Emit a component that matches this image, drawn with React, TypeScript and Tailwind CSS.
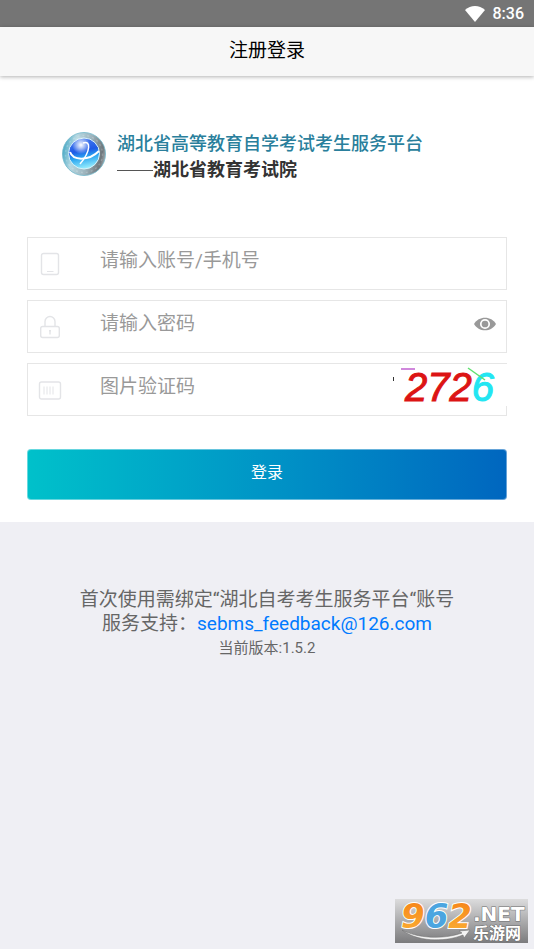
import { useState } from 'react'

const inputClass =
  'h-full min-w-0 flex-1 bg-transparent pb-1.5 text-[19px] text-gray-700 placeholder:text-[#999999] outline-none'

function WifiIcon() {
  return (
    <svg className="h-4 w-5" viewBox="0 0 20 16" fill="#ffffff" aria-hidden="true">
      <path d="M0 4C3 1.400 6.300 0 10 0s7 1.400 10 4L10 16z" />
    </svg>
  )
}

function PhoneIcon() {
  return (
    <svg className="h-6 w-6" viewBox="0 0 24 24" fill="none" stroke="#e3e4e7" strokeWidth="1.400" aria-hidden="true">
      <rect x="3.500" y="1.500" width="17" height="21" rx="2" />
      <path d="M9 19.500h6.500" strokeWidth="1" />
    </svg>
  )
}

function LockIcon() {
  return (
    <svg className="h-6 w-6" viewBox="0 0 24 24" fill="none" stroke="#e3e4e7" strokeWidth="1.400" aria-hidden="true">
      <rect x="2.700" y="11.500" width="18.600" height="11" rx="2" />
      <path d="M7 11.500V6.500a5 5 0 0 1 10 0v5" />
      <path d="M12 15.500v4M11 15.700h2" />
    </svg>
  )
}

function CodeIcon() {
  return (
    <svg className="h-6 w-6" viewBox="0 0 24 24" fill="none" stroke="#e3e4e7" strokeWidth="1.400" aria-hidden="true">
      <rect x="1.500" y="4" width="21" height="17" rx="2" />
      <path d="M6 8.500v8M9 8.500v8M12 8.500v8M15 8.500v8" strokeWidth="1" />
    </svg>
  )
}

function EyeIcon() {
  return (
    <svg className="h-6 w-6" viewBox="0 0 24 24" aria-hidden="true">
      <path d="M1 12C3.500 7.900 7.400 5.700 12 5.700S20.500 7.900 23 12c-2.500 4.100-6.400 6.300-11 6.300S3.500 16.100 1 12z" fill="#999999" />
      <circle cx="12" cy="12" r="4.200" fill="#999999" stroke="#ffffff" strokeWidth="1.700" />
    </svg>
  )
}

function GlobeLogo() {
  return (
    <svg className="h-[46px] w-11 shrink-0" viewBox="0 0 44 44" aria-hidden="true">
      <defs>
        <linearGradient id="ring" x1="0" y1="0.400" x2="1" y2="0.600">
          <stop offset="0" stopColor="#4aa9c6" />
          <stop offset="0.250" stopColor="#b5d8e2" />
          <stop offset="0.600" stopColor="#9db4bd" />
          <stop offset="0.900" stopColor="#6f777c" />
          <stop offset="1" stopColor="#a5adb1" />
        </linearGradient>
        <linearGradient id="ball" x1="0.400" y1="0" x2="0.600" y2="1">
          <stop offset="0" stopColor="#4a7cf0" />
          <stop offset="0.400" stopColor="#1f5ae6" />
          <stop offset="0.620" stopColor="#2ba6f0" />
          <stop offset="1" stopColor="#a0f4ff" />
        </linearGradient>
        <radialGradient id="shine">
          <stop offset="0" stopColor="#ffffff" />
          <stop offset="1" stopColor="#ffffff" stopOpacity="0" />
        </radialGradient>
      </defs>
      <circle cx="22" cy="22" r="21.500" fill="url(#ring)" stroke="#6fb6ca" strokeWidth="0.800" />
      <circle cx="22" cy="22" r="18.500" fill="none" stroke="#ffffff" strokeWidth="1.500" strokeDasharray="2 3" opacity="0.200" />
      <circle cx="22" cy="21.500" r="15.500" fill="url(#ball)" stroke="#d7f2fb" />
      <path d="M8 20c3 9 19 9 29-1" fill="none" stroke="#ffffff" strokeWidth="2" />
      <path d="M21 11c8-3 8 8-3 21" fill="none" stroke="#ffffff" strokeWidth="1.500" />
      <circle cx="19" cy="13" r="9" fill="url(#shine)" />
    </svg>
  )
}

function SiteBadge() {
  return (
    <svg className="h-11 w-[134px] overflow-visible" viewBox="0 0 134 44" role="img" aria-label="962.NET 乐游网">
      <defs>
        <linearGradient id="plate" x1="0" y1="0" x2="0" y2="1">
          <stop offset="0" stopColor="#dcdcdd" />
          <stop offset="1" stopColor="#7b7b7d" />
        </linearGradient>
        <linearGradient id="orange" x1="0" y1="0" x2="0" y2="1">
          <stop offset="0" stopColor="#f57f16" />
          <stop offset="1" stopColor="#fbb236" />
        </linearGradient>
      </defs>
      <rect x="1" width="133" height="44" fill="url(#plate)" />
      <path d="M8 31c15 8 40 10 60 3l-3-2 11-1-6 8-1-3C49 44 22 42 8 31z" fill="#f4f4f4" stroke="#6a6a6a" strokeWidth="0.500" />
      <g
        fontFamily="DejaVu Sans"
        fontWeight="bold"
        fontStyle="italic"
        fontSize="34"
        stroke="#ffffff"
        strokeWidth="2"
        paintOrder="stroke"
      >
        <text x="7" y="29">
          <tspan fill="url(#orange)">9</tspan>
          <tspan fill="#4ba5e0">6</tspan>
          <tspan fill="url(#orange)">2</tspan>
        </text>
      </g>
      <g fill="#ffffff" stroke="#6c6c6c" strokeWidth="1" paintOrder="stroke" fontWeight="bold">
        <text x="79" y="22" fontFamily="DejaVu Sans" fontSize="20">.NET</text>
        <text x="79" y="40" fontFamily="Noto Sans CJK SC" fontSize="16">乐游网</text>
      </g>
    </svg>
  )
}

export default function App() {
  const [showPassword, setShowPassword] = useState(false)

  return (
    <div className="flex min-h-screen flex-col bg-[#efeff4] font-['Roboto','Noto_Sans_CJK_SC',sans-serif]">
      {/* Status bar */}
      <div className="flex h-[27px] items-center justify-end gap-2 bg-[#757575] pr-[10px] text-base font-medium text-white">
        <WifiIcon />
        <span>8:36</span>
      </div>

      {/* Title bar */}
      <header className="z-10 flex h-[49px] items-center justify-center bg-[#f7f7f7] shadow-[0_1px_4px_rgba(0,0,0,0.3)]">
        <h1 className="text-[19px] text-black">注册登录</h1>
      </header>

      <main className="bg-white px-[27px] pt-[55px] pb-[22px]">
        {/* Platform logo */}
        <div className="flex gap-[11px] pl-[35px]">
          <GlobeLogo />
          <div className="whitespace-nowrap">
            <p className="text-[18px] leading-[26px] font-medium text-[#2a7f9c]">湖北省高等教育自学考试考生服务平台</p>
            <p className="flex items-center text-[18px] leading-[26px] font-bold text-[#333333]">
              <span className="h-px w-9 bg-[#555555]"></span>
              湖北省教育考试院
            </p>
          </div>
        </div>

        <form className="mt-[54px]" onSubmit={(e) => e.preventDefault()}>
          <div className="flex flex-col gap-[10px]">
            <div className="flex h-[53px] items-center border border-[#e6e6e6] pl-[10px]">
              <label htmlFor="account" aria-label="账号/手机号" className="w-[62px]">
                <PhoneIcon />
              </label>
              <input id="account" type="text" placeholder="请输入账号/手机号" className={inputClass} />
            </div>

            <div className="flex h-[53px] items-center border border-[#e6e6e6] pr-[9px] pl-[10px]">
              <label htmlFor="password" aria-label="密码" className="w-[62px]">
                <LockIcon />
              </label>
              <input
                id="password"
                type={showPassword ? 'text' : 'password'}
                placeholder="请输入密码"
                className={inputClass}
              />
              <button type="button" aria-label="显示密码" className="pb-1.5" onClick={() => setShowPassword(!showPassword)}>
                <EyeIcon />
              </button>
            </div>

            <div className="relative flex h-[53px] items-center border border-[#e6e6e6] pl-[10px]">
              <label htmlFor="captcha" aria-label="图片验证码" className="w-[62px]">
                <CodeIcon />
              </label>
              <input id="captcha" type="text" placeholder="图片验证码" className={inputClass} />
              {/* Captcha picture lies over the right border */}
              <button
                type="button"
                aria-label="刷新验证码"
                className="absolute top-0 -right-px flex h-[42px] w-[120px] items-center bg-white pt-1 pl-[18px] font-['Liberation_Sans',sans-serif] text-[40px] leading-10 text-[#dc1414] italic [-webkit-text-stroke:1px]"
              >
                <span>272</span>
                <span className="text-[#22e6f2]">6</span>
                <svg className="absolute inset-0 h-10 w-[120px]" viewBox="0 0 120 40" fill="none" aria-hidden="true">
                  <path d="M6.500 13v4" stroke="#333333" />
                  <path d="M14 5h14" stroke="#c060d0" strokeWidth="1.500" />
                  <path d="M81 4l17 12" stroke="#5fe070" strokeWidth="1.500" />
                </svg>
              </button>
            </div>
          </div>

          <button
            type="submit"
            className="mt-[33px] h-[51px] w-full rounded-[4px] border border-white/40 bg-linear-to-r from-[#00c1ca] to-[#0066bf] bg-origin-border pb-1 text-base text-white"
          >
            登录
          </button>
        </form>
      </main>

      <footer className="flex flex-1 flex-col px-[6px] pt-[66px] pb-[6px]">
        <div className="text-center text-[19px] leading-6 text-[#666666]">
          <p>首次使用需绑定“湖北自考考生服务平台“账号</p>
          <p>
            服务支持：
            <a href="mailto:sebms_feedback@126.com" className="text-[#007aff]">
              sebms_feedback@126.com
            </a>
          </p>
          <p className="text-[15px] leading-6">当前版本:1.5.2</p>
        </div>
        <div className="mt-auto self-end">
          <SiteBadge />
        </div>
      </footer>
    </div>
  )
}
